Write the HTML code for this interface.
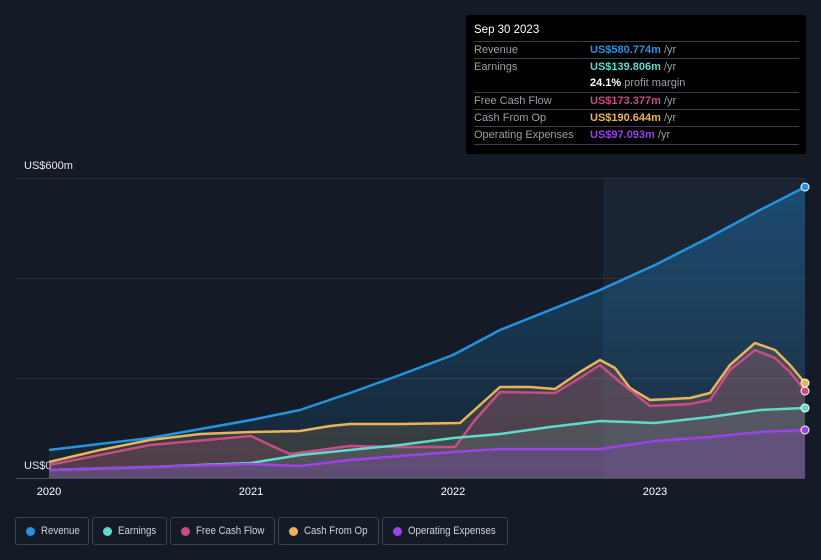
<!DOCTYPE html>
<html><head><meta charset="utf-8"><style>
body{margin:0;width:821px;height:560px;background:#151b26;font-family:"Liberation Sans",sans-serif;overflow:hidden;position:relative}
.tip{position:absolute;left:466px;top:15px;width:340px;height:139px;background:#000;border-radius:2px;color:#ccc;font-size:11px}
.tip .h{position:absolute;left:8px;top:9px;color:#fff;font-size:11.5px}
.row{position:absolute;left:8px;width:325px;border-top:1px solid #3a3f48;height:17px;line-height:17px}
.row .l{position:absolute;left:0;color:#9aa0a8}
.row .v{position:absolute;left:116px;font-weight:bold;white-space:nowrap}
.row .v span{color:#9aa0a8;font-weight:normal}
.leg{position:absolute;top:517px;height:28px;border:1px solid #3d4350;border-radius:3px;color:#cfd3d9;font-size:11px;line-height:27px;box-sizing:border-box;white-space:nowrap}
.leg i{position:absolute;left:10px;top:9px;width:9px;height:9px;border-radius:50%}
.leg b{font-weight:normal;position:absolute;left:25px;display:inline-block;transform:scaleX(0.88);transform-origin:left center}
.ax{position:absolute;color:#fff;font-size:11px}
</style></head><body>
<div class="ax" style="left:24px;top:160px;color:#e6e6e6">US$600m</div>
<div class="ax" style="left:24px;top:460px;color:#e6e6e6">US$0</div>
<svg style="position:absolute;left:0;top:0" width="821" height="560">
<defs><linearGradient id="g" x1="0" y1="0" x2="0" y2="1"><stop offset="0" stop-color="#2394df" stop-opacity="0.35"/><stop offset="1" stop-color="#2394df" stop-opacity="0.08"/></linearGradient></defs>
<rect x="603" y="178" width="202" height="300" fill="#1a2433"/>
<g stroke="#2c323d" stroke-width="1">
<line x1="16" y1="178.5" x2="805" y2="178.5"/><line x1="16" y1="278.5" x2="805" y2="278.5"/><line x1="16" y1="378.5" x2="805" y2="378.5"/></g>
<line x1="16" y1="478.5" x2="805" y2="478.5" stroke="#4a505a"/>
<g stroke="none">
<polygon fill="url(#g)" points="49,450 150,438 251,420 300,410 350,393 400,375 453,355 500,330 550,310 600,290 655,265 710,237 760,210 805,187 805,478 49,478"/>
<polygon fill="#e9b45c" fill-opacity="0.15" points="49,462 100,450 150,440 200,434 251,432 300,431 330,426 350,424 400,424 460,423 480,405 500,387 530,387 555,389 580,372 600,360 615,368 630,388 650,400 690,398 710,393 730,365 755,343 775,350 790,365 805,383 805,478 49,478"/>
<polygon fill="#c94c87" fill-opacity="0.18" points="49,465 150,445 251,436 270,445 290,454 320,450 350,446 400,447 455,447 475,420 500,392 555,393 580,378 600,365 620,382 650,406 690,404 710,400 730,370 755,350 775,358 790,372 805,391 805,478 49,478"/>
<polygon fill="#5fd9c9" fill-opacity="0.12" points="49,470 150,467 251,463 300,455 400,445 453,438 500,434 550,427 600,421 655,423 710,417 760,410 805,408 805,478 49,478"/>
<polygon fill="#9b43e8" fill-opacity="0.2" points="49,470 150,467 251,464 300,466 350,460 400,456 453,452 500,449 600,449 655,441 710,437 760,432 805,430 805,478 49,478"/>
</g>
<g stroke-linejoin="round" fill="none" stroke-width="2.5">
<polyline stroke="#2394df" points="49,450 150,438 251,420 300,410 350,393 400,375 453,355 500,330 550,310 600,290 655,265 710,237 760,210 805,187"/>
<polyline stroke="#e9b45c" points="49,462 100,450 150,440 200,434 251,432 300,431 330,426 350,424 400,424 460,423 480,405 500,387 530,387 555,389 580,372 600,360 615,368 630,388 650,400 690,398 710,393 730,365 755,343 775,350 790,365 805,383"/>
<polyline stroke="#c94c87" points="49,465 150,445 251,436 270,445 290,454 320,450 350,446 400,447 455,447 475,420 500,392 555,393 580,378 600,365 620,382 650,406 690,404 710,400 730,370 755,350 775,358 790,372 805,391"/>
<polyline stroke="#5fd9c9" points="49,470 150,467 251,463 300,455 400,445 453,438 500,434 550,427 600,421 655,423 710,417 760,410 805,408"/>
<polyline stroke="#9b43e8" points="49,470 150,467 251,464 300,466 350,460 400,456 453,452 500,449 600,449 655,441 710,437 760,432 805,430"/>
</g>
<g stroke="#fff" stroke-width="1">
<circle cx="805" cy="187" r="4" fill="#2394df"/><circle cx="805" cy="383" r="4" fill="#e9b45c"/><circle cx="805" cy="391" r="4" fill="#c94c87"/><circle cx="805" cy="408" r="4" fill="#5fd9c9"/><circle cx="805" cy="430" r="4" fill="#9b43e8"/></g>
<g fill="#fff" font-size="11" font-family="Liberation Sans" text-anchor="middle">
<text x="49" y="495">2020</text><text x="251" y="495">2021</text><text x="453" y="495">2022</text><text x="655" y="495">2023</text></g>
</svg>
<div class="tip"><div class="h">Sep 30 2023</div>
<div class="row" style="top:26px"><span class="l">Revenue</span><span class="v" style="color:#2394df">US$580.774m <span>/yr</span></span></div>
<div class="row" style="top:43px"><span class="l">Earnings</span><span class="v" style="color:#5fd9c9">US$139.806m <span>/yr</span></span></div>
<div class="row" style="top:60px;border-top:none"><span class="v" style="color:#fff">24.1% <span>profit margin</span></span></div>
<div class="row" style="top:77px"><span class="l">Free Cash Flow</span><span class="v" style="color:#c94c87">US$173.377m <span>/yr</span></span></div>
<div class="row" style="top:94px"><span class="l">Cash From Op</span><span class="v" style="color:#e9b45c">US$190.644m <span>/yr</span></span></div>
<div class="row" style="top:111px"><span class="l">Operating Expenses</span><span class="v" style="color:#9b43e8">US$97.093m <span>/yr</span></span></div>
<div class="row" style="top:129px;height:0"></div>
</div>
<div class="leg" style="left:15px;width:74px"><i style="background:#2394df"></i><b>Revenue</b></div>
<div class="leg" style="left:92px;width:75px"><i style="background:#5fd9c9"></i><b>Earnings</b></div>
<div class="leg" style="left:170px;width:105px"><i style="background:#c94c87"></i><b>Free Cash Flow</b></div>
<div class="leg" style="left:278px;width:101px"><i style="background:#e9b45c"></i><b>Cash From Op</b></div>
<div class="leg" style="left:382px;width:126px"><i style="background:#9b43e8"></i><b>Operating Expenses</b></div>
</body></html>
